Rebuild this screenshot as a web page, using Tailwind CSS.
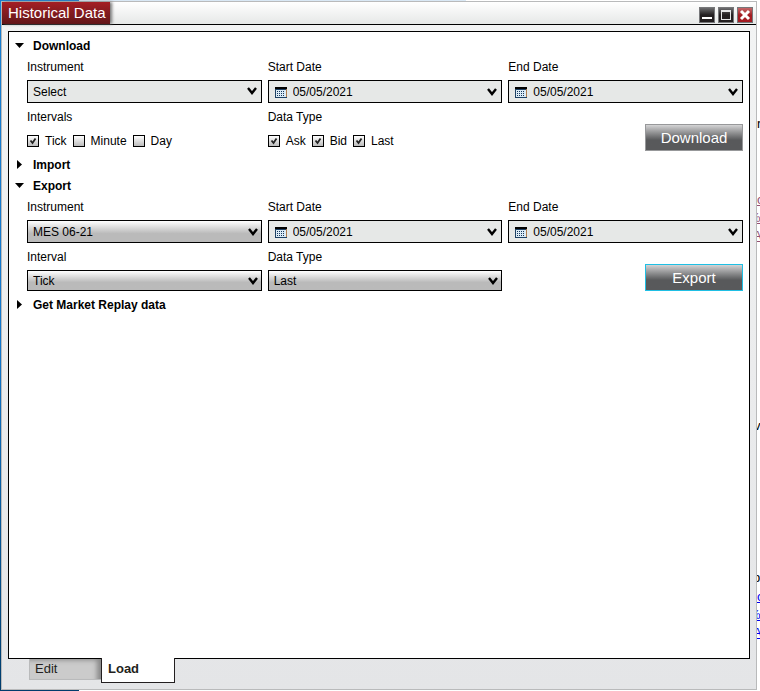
<!DOCTYPE html>
<html lang="en">
<head>
    <meta charset="UTF-8">
    <meta name="viewport" content="width=device-width, initial-scale=1.0">
    <title>Historical Data</title>
    <script src="https://cdn.jsdelivr.net/npm/@tailwindcss/browser@4"></script>
</head>
<body class="relative flex min-h-screen flex-col overflow-hidden bg-white pt-px pr-[3px] pb-px pl-px font-['Liberation_Sans',Arial,sans-serif] text-xs text-black">
    <!-- Desktop and browser page behind the window -->
    <div class="absolute inset-y-0 left-0 w-[79px] bg-linear-to-b from-[#1a7fd0] via-[#1277cd] via-50% to-[#003c6c]"></div>
    <div class="absolute top-0 left-[79px] h-px w-[387px] bg-[#d9e8f5]"></div>
    <div class="absolute inset-y-0 right-0 w-[3px] overflow-hidden bg-white text-[13px] leading-[18px]">
        <span class="absolute top-[115px] left-0">r</span>
        <div class="absolute top-[191px] left-0 flex flex-col text-[#954f72] underline">
            <a href="#">c</a>
            <a href="#" class="-ml-2">%</a>
            <a href="#" class="-ml-1">A</a>
        </div>
        <span class="absolute top-[417px] left-[-3px]">v</span>
        <span class="absolute top-[569px] left-[-4px]">p</span>
        <div class="absolute top-[588px] left-0 flex flex-col text-[#0000ee] underline">
            <a href="#">c</a>
            <a href="#" class="-ml-2">%</a>
            <a href="#" class="-ml-1">A</a>
        </div>
    </div>

    <!-- Window -->
    <div class="relative flex grow flex-col border border-[#b9babb] bg-linear-to-b from-[#f3f4f4] to-[#e4e5e7]">
        <!-- Title bar -->
        <header class="flex h-[23px] items-stretch justify-between border-b border-black bg-linear-to-b from-white to-[#e6e8e7]">
            <h1 class="bg-linear-to-b from-[#a51e23] to-[#621619] pr-1 pl-1.5 text-[15px] leading-[22px] text-white shadow-[2px_0_3px_#777]">Historical Data</h1>
            <div class="flex items-center gap-[3px] pt-1 pr-[3px]">
                <button type="button" aria-label="Minimize" class="size-4 border border-[#77787a] bg-linear-to-b from-[#6d6e70] to-[#231f20] to-50%">
                    <svg class="block size-[14px]" viewBox="0 0 14 14"><path d="M2 9h10v2H2z" fill="#fff"/></svg>
                </button>
                <button type="button" aria-label="Maximize" class="size-4 border border-[#77787a] bg-linear-to-b from-[#6d6e70] to-[#231f20] to-50%">
                    <svg class="block size-[14px]" viewBox="0 0 14 14"><path d="M2 2h10v10H2zM3 4v7h8V4z" fill="#e6e7e8" fill-rule="evenodd"/></svg>
                </button>
                <button type="button" aria-label="Close" class="size-4 border border-[#77787a] bg-linear-to-b from-[#c4666a] to-[#a31c22] to-50%">
                    <svg class="block size-[14px]" viewBox="0 0 14 14"><path d="M3 3l8 8M11 3l-8 8" stroke="#fff" stroke-width="3"/></svg>
                </button>
            </div>
        </header>

        <!-- Load panel -->
        <main class="mx-1.5 mt-1.5 flex grow flex-col border border-black bg-white pt-[3px]">
            <section>
                <button type="button" aria-expanded="true" class="flex h-[21px] items-center gap-2 pl-1.5 font-bold">
                    <svg class="w-2.5" viewBox="0 0 10 10"><path d="M0 2h9L4.500 7z"/></svg>
                    Download
                </button>
                <div class="grid grid-cols-3 gap-x-1.5 gap-y-[3px] pr-1.5 pb-[3px] pl-[18px]">
                    <div>
                        <label for="dl-instrument" class="mb-0.5 block leading-[22px]">Instrument</label>
                        <div class="relative">
                            <select id="dl-instrument" class="block h-[23px] w-full appearance-none border border-black bg-[#e6e8e7] pl-[5px]">
                                <option>Select</option>
                            </select>
                            <svg class="pointer-events-none absolute top-[7px] right-[5px] h-2 w-[10px]" viewBox="0 0 10 8"><path d="M1 1l4 5 4-5" fill="none" stroke="#000" stroke-width="2.400"/></svg>
                        </div>
                    </div>
                    <div>
                        <label for="dl-start" class="mb-0.5 block leading-[22px]">Start Date</label>
                        <div class="relative">
                            <input id="dl-start" type="text" value="05/05/2021" class="block h-[23px] w-full border border-black bg-[#e6e8e7] pl-6">
                            <svg class="pointer-events-none absolute top-[7px] left-[7px] h-[11px] w-3" viewBox="0 0 12 11"><path d="M0 2h12v9H0z" fill="#1d4063"/><path d="M11 2h1v8h-1z" fill="#b07c4a"/><path d="M1 3h10v7H1z" fill="#dcebf5"/><path d="M0 0h12v2H0z"/><path d="M2 4h8M2 6h8M2 8h8" stroke="#14365c" stroke-width="1" stroke-dasharray="1 1" transform="translate(0 .5)"/></svg>
                            <svg class="pointer-events-none absolute top-2 right-[5px] h-2 w-[10px]" viewBox="0 0 10 8"><path d="M1 1l4 5 4-5" fill="none" stroke="#000" stroke-width="2.400"/></svg>
                        </div>
                    </div>
                    <div>
                        <label for="dl-end" class="mb-0.5 block leading-[22px]">End Date</label>
                        <div class="relative">
                            <input id="dl-end" type="text" value="05/05/2021" class="block h-[23px] w-full border border-black bg-[#e6e8e7] pl-6">
                            <svg class="pointer-events-none absolute top-[7px] left-[7px] h-[11px] w-3" viewBox="0 0 12 11"><path d="M0 2h12v9H0z" fill="#1d4063"/><path d="M11 2h1v8h-1z" fill="#b07c4a"/><path d="M1 3h10v7H1z" fill="#dcebf5"/><path d="M0 0h12v2H0z"/><path d="M2 4h8M2 6h8M2 8h8" stroke="#14365c" stroke-width="1" stroke-dasharray="1 1" transform="translate(0 .5)"/></svg>
                            <svg class="pointer-events-none absolute top-2 right-[5px] h-2 w-[10px]" viewBox="0 0 10 8"><path d="M1 1l4 5 4-5" fill="none" stroke="#000" stroke-width="2.400"/></svg>
                        </div>
                    </div>
                    <fieldset>
                        <legend class="mb-0.5 leading-[22px]">Intervals</legend>
                        <div class="flex h-[21px] items-center gap-1.5">
                            <label class="relative flex items-center gap-1.5">
                                <input type="checkbox" checked class="peer size-3 appearance-none border border-black bg-linear-to-b from-white to-[#bcbcbc]">
                                <svg class="absolute left-0 hidden size-3 peer-checked:block" viewBox="0 0 12 12"><path d="M3.500 5.500l2 2.500 3-4.500" fill="none" stroke="#222" stroke-width="1.800"/></svg>
                                Tick
                            </label>
                            <label class="relative flex items-center gap-1.5">
                                <input type="checkbox" class="peer size-3 appearance-none border border-black bg-linear-to-b from-white to-[#bcbcbc]">
                                <svg class="absolute left-0 hidden size-3 peer-checked:block" viewBox="0 0 12 12"><path d="M3.500 5.500l2 2.500 3-4.500" fill="none" stroke="#222" stroke-width="1.800"/></svg>
                                Minute
                            </label>
                            <label class="relative flex items-center gap-1.5">
                                <input type="checkbox" class="peer size-3 appearance-none border border-black bg-linear-to-b from-white to-[#bcbcbc]">
                                <svg class="absolute left-0 hidden size-3 peer-checked:block" viewBox="0 0 12 12"><path d="M3.500 5.500l2 2.500 3-4.500" fill="none" stroke="#222" stroke-width="1.800"/></svg>
                                Day
                            </label>
                        </div>
                    </fieldset>
                    <fieldset>
                        <legend class="mb-0.5 leading-[22px]">Data Type</legend>
                        <div class="flex h-[21px] items-center gap-1.5">
                            <label class="relative flex items-center gap-1.5">
                                <input type="checkbox" checked class="peer size-3 appearance-none border border-black bg-linear-to-b from-white to-[#bcbcbc]">
                                <svg class="absolute left-0 hidden size-3 peer-checked:block" viewBox="0 0 12 12"><path d="M3.500 5.500l2 2.500 3-4.500" fill="none" stroke="#222" stroke-width="1.800"/></svg>
                                Ask
                            </label>
                            <label class="relative flex items-center gap-1.5">
                                <input type="checkbox" checked class="peer size-3 appearance-none border border-black bg-linear-to-b from-white to-[#bcbcbc]">
                                <svg class="absolute left-0 hidden size-3 peer-checked:block" viewBox="0 0 12 12"><path d="M3.500 5.500l2 2.500 3-4.500" fill="none" stroke="#222" stroke-width="1.800"/></svg>
                                Bid
                            </label>
                            <label class="relative flex items-center gap-1.5">
                                <input type="checkbox" checked class="peer size-3 appearance-none border border-black bg-linear-to-b from-white to-[#bcbcbc]">
                                <svg class="absolute left-0 hidden size-3 peer-checked:block" viewBox="0 0 12 12"><path d="M3.500 5.500l2 2.500 3-4.500" fill="none" stroke="#222" stroke-width="1.800"/></svg>
                                Last
                            </label>
                        </div>
                    </fieldset>
                    <button type="button" class="h-[27px] w-[98px] self-end justify-self-end border border-[#97989a] bg-linear-to-b from-[#d4d4d5] to-[#58595b] to-60% text-[15px] text-white">Download</button>
                </div>
            </section>

            <button type="button" aria-expanded="false" class="flex h-[21px] items-center gap-2 pl-1.5 font-bold">
                <svg class="w-2.5" viewBox="0 0 10 10"><path d="M2 0l5 4.500L2 9z"/></svg>
                Import
            </button>

            <section>
                <button type="button" aria-expanded="true" class="flex h-[21px] items-center gap-2 pl-1.5 font-bold">
                    <svg class="w-2.5" viewBox="0 0 10 10"><path d="M0 2h9L4.500 7z"/></svg>
                    Export
                </button>
                <div class="grid grid-cols-3 gap-x-1.5 gap-y-[3px] pr-1.5 pb-[3px] pl-[18px]">
                    <div>
                        <label for="ex-instrument" class="mb-0.5 block leading-[22px]">Instrument</label>
                        <div class="relative">
                            <select id="ex-instrument" class="block h-[23px] w-full appearance-none border border-black bg-linear-to-b from-white to-[#bababa] to-60% pl-[5px]">
                                <option>MES 06-21</option>
                            </select>
                            <svg class="pointer-events-none absolute top-2 right-1 h-2 w-[10px]" viewBox="0 0 10 8"><path d="M1 1l4 5 4-5" fill="none" stroke="#000" stroke-width="2.400"/></svg>
                        </div>
                    </div>
                    <div>
                        <label for="ex-start" class="mb-0.5 block leading-[22px]">Start Date</label>
                        <div class="relative">
                            <input id="ex-start" type="text" value="05/05/2021" class="block h-[23px] w-full border border-black bg-[#e6e8e7] pl-6">
                            <svg class="pointer-events-none absolute top-[7px] left-[7px] h-[11px] w-3" viewBox="0 0 12 11"><path d="M0 2h12v9H0z" fill="#1d4063"/><path d="M11 2h1v8h-1z" fill="#b07c4a"/><path d="M1 3h10v7H1z" fill="#dcebf5"/><path d="M0 0h12v2H0z"/><path d="M2 4h8M2 6h8M2 8h8" stroke="#14365c" stroke-width="1" stroke-dasharray="1 1" transform="translate(0 .5)"/></svg>
                            <svg class="pointer-events-none absolute top-2 right-[5px] h-2 w-[10px]" viewBox="0 0 10 8"><path d="M1 1l4 5 4-5" fill="none" stroke="#000" stroke-width="2.400"/></svg>
                        </div>
                    </div>
                    <div>
                        <label for="ex-end" class="mb-0.5 block leading-[22px]">End Date</label>
                        <div class="relative">
                            <input id="ex-end" type="text" value="05/05/2021" class="block h-[23px] w-full border border-black bg-[#e6e8e7] pl-6">
                            <svg class="pointer-events-none absolute top-[7px] left-[7px] h-[11px] w-3" viewBox="0 0 12 11"><path d="M0 2h12v9H0z" fill="#1d4063"/><path d="M11 2h1v8h-1z" fill="#b07c4a"/><path d="M1 3h10v7H1z" fill="#dcebf5"/><path d="M0 0h12v2H0z"/><path d="M2 4h8M2 6h8M2 8h8" stroke="#14365c" stroke-width="1" stroke-dasharray="1 1" transform="translate(0 .5)"/></svg>
                            <svg class="pointer-events-none absolute top-2 right-[5px] h-2 w-[10px]" viewBox="0 0 10 8"><path d="M1 1l4 5 4-5" fill="none" stroke="#000" stroke-width="2.400"/></svg>
                        </div>
                    </div>
                    <div>
                        <label for="ex-interval" class="mb-0.5 block leading-[22px]">Interval</label>
                        <div class="relative">
                            <select id="ex-interval" class="block h-[21px] w-full appearance-none border border-black bg-linear-to-b from-white to-[#bababa] to-60% pl-[5px]">
                                <option>Tick</option>
                            </select>
                            <svg class="pointer-events-none absolute top-[7px] right-1 h-2 w-[10px]" viewBox="0 0 10 8"><path d="M1 1l4 5 4-5" fill="none" stroke="#000" stroke-width="2.400"/></svg>
                        </div>
                    </div>
                    <div>
                        <label for="ex-type" class="mb-0.5 block leading-[22px]">Data Type</label>
                        <div class="relative">
                            <select id="ex-type" class="block h-[21px] w-full appearance-none border border-black bg-linear-to-b from-white to-[#bababa] to-60% pl-[5px]">
                                <option>Last</option>
                            </select>
                            <svg class="pointer-events-none absolute top-[7px] right-1 h-2 w-[10px]" viewBox="0 0 10 8"><path d="M1 1l4 5 4-5" fill="none" stroke="#000" stroke-width="2.400"/></svg>
                        </div>
                    </div>
                    <button type="button" class="h-[27px] w-[98px] self-end justify-self-end border border-[#1fbfe4] bg-linear-to-b from-[#d4d4d5] to-[#58595b] to-60% text-[15px] text-white">Export</button>
                </div>
            </section>

            <button type="button" aria-expanded="false" class="flex h-[21px] items-center gap-2 pl-1.5 font-bold">
                <svg class="w-2.5" viewBox="0 0 10 10"><path d="M2 0l5 4.500L2 9z"/></svg>
                Get Market Replay data
            </button>
        </main>

        <!-- Tabs -->
        <nav role="tablist" class="flex h-[30px] items-start pl-[27px] text-[13px] text-[#231f20]">
            <button type="button" role="tab" aria-selected="false" class="h-[21px] w-[72px] border-b border-l border-[#b9babb] bg-[#cbcbcb] pl-[5px] text-left shadow-[inset_-6px_3px_5px_-2px_#888]">Edit</button>
            <button type="button" role="tab" aria-selected="true" class="-mt-px h-[25px] w-[74px] border border-t-0 border-[#231f20] bg-white pb-0.5 pl-1.5 text-left font-bold">Load</button>
        </nav>
    </div>
</body>
</html>
